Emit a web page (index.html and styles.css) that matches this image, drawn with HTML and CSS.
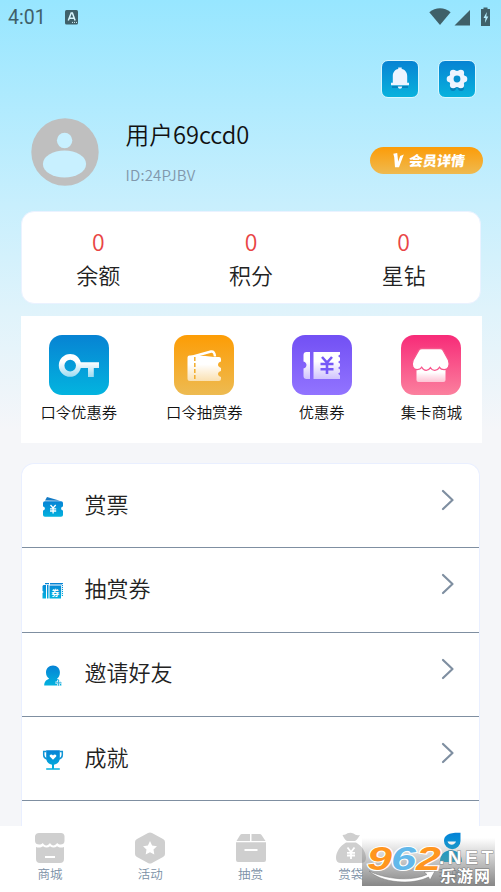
FILE: index.html
```html
<!DOCTYPE html>
<html lang="zh-CN">
<head>
<meta charset="utf-8">
<title>我的</title>
<link rel="stylesheet" href="styles.css">
</head>
<body>
<svg class="defs" width="0" height="0">
  <defs>
    <linearGradient id="blue" x1="0" y1="0" x2="0" y2="1"><stop offset="0" stop-color="#0682d5"/><stop offset="1" stop-color="#03b2de"/></linearGradient>
    <linearGradient id="fade" x1="0" y1="0" x2="0" y2="1"><stop offset=".35" stop-color="#fff"/><stop offset="1" stop-color="#fff" stop-opacity=".6"/></linearGradient>
  </defs>
</svg>
<div class="app">
  <header class="status">
    <span class="clock">4:01</span>
    <svg class="lang" width="13" height="15" viewBox="0 0 13 15"><rect width="13" height="14.5" rx="1.5" fill="#3f6069"/><path d="M3.3 10.5 6.2 3h1.2l2.7 7.5M4.5 8.3h4.300" fill="none" stroke="#d8f5fd" stroke-width="1.5"/><path d="M7 12.4h5" stroke="#d8f5fd" stroke-dasharray="1 1"/></svg>
    <svg class="signals" width="64" height="20" viewBox="0 0 64 20"><g fill="#3f6069"><path d="M.3 5.2C6.5-.2 15.500-.2 21.600 5.200L11 18z"/><path d="M25.500 18.500 41 3v15.500z"/><path d="M54.500 2V.500h4V2h2.500v17H52V2z"/></g><path d="m57.800 5-3.300 6h2l-.6 5 3.400-6.600h-2z" fill="#b6efff"/></svg>
  </header>
  <div class="tools">
    <div class="tool"><svg width="36" height="36" viewBox="0 0 36 36"><path d="M10 25h16v2H10z" fill="#056eaa" opacity=".6"/><path d="M9 24.300v-2.500h1.800v-6.500c0-4 2-6.600 5.400-7.300V6.600h3.500V8c3.400.7 5.500 3.300 5.500 7.300v6.500H27v2.500z" fill="#edf4ff"/><path d="M15.800 25.500h4.400c-.3 2.900-4.100 2.900-4.400 0z" fill="#edf4ff"/></svg></div>
    <div class="tool"><svg width="36" height="36" viewBox="0 0 36 36"><g fill="#0671ad" opacity=".7" transform="translate(0 1.500)"><circle cx="18" cy="18" r="7.800"/><circle cx="14" cy="25.500" r="3"/><circle cx="22" cy="25.500" r="3"/></g><g fill="#edf4ff"><circle cx="18" cy="18" r="8.300"/><circle cx="11" cy="18" r="3.300"/><circle cx="25" cy="18" r="3.300"/><circle cx="14.200" cy="12" r="3.300"/><circle cx="21.800" cy="12" r="3.300"/><circle cx="14.200" cy="24" r="3.300"/><circle cx="21.800" cy="24" r="3.300"/></g><circle cx="18" cy="18" r="3.400" fill="#0790cf"/></svg></div>
  </div>
  <section class="profile">
    <svg class="avatar" width="68" height="68" viewBox="0 0 68 68"><circle cx="34" cy="34" r="33.700" fill="#bfbfbf"/><circle cx="33.600" cy="22.500" r="7.700" fill="#c8f0ff"/><ellipse cx="33.500" cy="46" rx="21.600" ry="13.500" fill="#c8f0ff"/></svg>
    <div class="who"><div class="name">用户69ccd0</div><div class="uid">ID:24PJBV</div></div>
    <div class="vip"><svg width="11" height="15" viewBox="0 0 11 15"><path d="M.3.700 4.200 0l1 8.800L7.200 3l3.600-1.500L6 14.300H2L1.200 4z" fill="#fff"/></svg><span>会员详情</span></div>
  </section>
  <section class="stats">
    <div class="stat"><b>0</b><span>余额</span></div>
    <div class="stat"><b>0</b><span>积分</span></div>
    <div class="stat"><b>0</b><span>星钻</span></div>
  </section>
  <section class="shortcuts">
    <div class="shortcut"><div class="tile key"><svg width="60" height="60" viewBox="0 0 60 60"><path fill="url(#fade)" fill-rule="evenodd" d="M21.200 19c5.200 0 9.200 3.500 10.600 8.200H50V33h-5.200v9H39v-9h-7.200c-1.300 5.200-5.400 8.800-10.600 8.800A11.400 11.400 0 1 1 21.200 19zm0 5.800a5.800 5.800 0 1 0 0 11.600 5.800 5.800 0 0 0 0-11.600z"/></svg></div><span>口令优惠券</span></div>
    <div class="shortcut"><div class="tile ticket"><svg width="60" height="60" viewBox="0 0 60 60"><path d="m15.500 22.500 21.500-6q3.500-.6 4 5" fill="none" stroke="#fff" stroke-width="2.500"/><path fill="url(#fade)" d="M13.500 22.500q0-2 2-2l16 .5 8.500 1h5q2 0 2 2v2.600c-4 .8-4 5.500 0 6.300v3c-4 .8-4 5.200 0 6V44q0 2-2 2H16q-2.500 0-2.500-2.500z"/><path d="M20.800 22v24" stroke="#f3ad2c" stroke-width="1.500" stroke-dasharray="4 2"/></svg></div><span>口令抽赏券</span></div>
    <div class="shortcut"><div class="tile coupon"><svg width="60" height="60" viewBox="0 0 60 60"><path fill="url(#fade)" d="M14.500 17H18v27h-3.500q-3 0-3-3v-7.500c4-1 4-6 0-7V20q0-3 3-3zM21.500 17H48v2.500l-2 1.600 2 1.700v2.600l-2 1.600 2 1.700v2.600l-2 1.600 2 1.700v2.600l-2 1.600 2 1.700V44H21.500z"/><path d="m30 22 5 5.500 5-5.500M35 27v12M28.500 29h13M28.500 34.200h13" fill="none" stroke="#7558f7" stroke-width="2.600"/></svg></div><span>优惠券</span></div>
    <div class="shortcut"><div class="tile shop"><svg width="60" height="60" viewBox="0 0 60 60"><path fill="url(#fade)" d="M15.500 32h29v13q0 2-2 2h-25q-2 0-2-2z"/><path fill="#fff" stroke="#f8558c" stroke-width="1.300" d="M21 13.500h18q2 0 3 1.700l5.500 10c1.800 5.500-.4 9.400-4.400 9.400-2.500 0-3.800-1-4.600-2.300-2.500 4-7 4-9 .4-2.300 3.600-6.500 3.600-8.800-.4-.8 1.400-2.200 2.300-4.600 2.300-4 0-6-4-4-9.400l5.700-10q1.200-1.700 3.200-1.700z"/></svg></div><span>集卡商城</span></div>
  </section>
  <section class="menu">
    <div class="item"><svg class="ico" width="22" height="22" viewBox="0 0 22 22"><path fill="#147bc5" d="M3 4.500 5 1l13 3.800z"/><path fill="url(#blue)" d="M1 7q0-1.800 2-1.800h16q2 0 2 1.800v3.500c-2.500.3-2.500 3.700 0 4V19q0 1.800-2 1.800H3Q1 20.800 1 19v-4.500c2.500-.3 2.500-3.700 0-4z"/><path d="m8.500 9 2.600 3 2.600-3M11.100 12v5.500M8 12.800h6.200M8 15h6.200" fill="none" stroke="#fff" stroke-width="1.300"/></svg><span>赏票</span><svg class="go" width="14" height="22" viewBox="0 0 14 22"><path d="m2 2 9.500 9L2 20"/></svg></div>
    <div class="item"><svg class="ico" width="22" height="22" viewBox="0 0 22 22"><path fill="url(#blue)" d="M1.500 5H4v13.500H.500V13l1.200-1-1.200-1V6zM5 5h1.500v13.500H5zM7.500 5.500h11.500v13H7.500zM3 3h4v1.300H3zM8 3h13v13h-1.200V4.500H8z"/><path d="M20.400 4v13" stroke="#fff" stroke-dasharray="1 1"/><text x="13.200" y="15.500" text-anchor="middle" class="tiny">券</text></svg><span>抽赏券</span><svg class="go" width="14" height="22" viewBox="0 0 14 22"><path d="m2 2 9.500 9L2 20"/></svg></div>
    <div class="item"><svg class="ico" width="22" height="22" viewBox="0 0 22 22"><path fill="url(#blue)" d="M11 .500c4.200 0 6.900 2.900 6.900 7 0 2.800-1.200 5-3 6.300 2.500.9 4.200 2.500 4.600 6.700H2.200c0-4 2.200-5.900 5-6.800C5.300 12.500 4 10.300 4 7.500c0-4.100 2.800-7 7-7z"/><path d="M16.500 14.800v6M13.500 17.800h6" stroke="#fff" stroke-width="2.600"/><path d="M16.500 14.800v6M13.500 17.800h6" stroke="#3ab4e0" stroke-width="1.200"/></svg><span>邀请好友</span><svg class="go" width="14" height="22" viewBox="0 0 14 22"><path d="m2 2 9.500 9L2 20"/></svg></div>
    <div class="item"><svg class="ico" width="22" height="22" viewBox="0 0 22 22"><path fill="url(#blue)" d="M4.200 1.200h13.600V9c0 4-2.600 6.200-5.800 6.700v3.500h5.800v1.500H4.200v-1.500H10v-3.500C6.800 15.200 4.200 13 4.200 9z"/><path d="M4.500 2.500H1.700V6q0 3 3.300 4M17.500 2.500h2.800V6q0 3-3.300 4" fill="none" stroke="#1295d5" stroke-width="1.500"/><path d="M11 10.800 7.800 7.500C7 5.500 9.700 4.600 11 6.400c1.300-1.800 4-.9 3.200 1.100z" fill="#fff"/></svg><span>成就</span><svg class="go" width="14" height="22" viewBox="0 0 14 22"><path d="m2 2 9.500 9L2 20"/></svg></div>
  </section>
  <nav class="tabs">
    <div class="tab"><svg width="32" height="32" viewBox="0 0 32 32"><path d="M5 1h22q3 0 3.500 3v5c0 3.500-4.500 5-7.300 2-2.300 3.300-5.500 3.300-7.200 0-2.300 3.300-5.500 3.300-7.200 0C6 14 1 12.500 1 9V4q.8-3 4-3zM2 15c3 1 5 .5 7-.8 2.500 1.800 5 1.800 7 0 2.500 1.800 5 1.800 7 0 2 1.300 4 1.800 7 .8v12q0 4-4 4H6q-4 0-4-4z"/><path class="cut" d="M11 24h10v2H11z"/></svg><span>商城</span></div>
    <div class="tab"><svg width="32" height="32" viewBox="0 0 32 32"><path d="M14 1q2-1 4 0l11 6q2 1 2 3v12q0 2-2 3l-11 6q-2 1-4 0L3 25q-2-1-2-3V10q0-2 2-3z"/><path class="cut" d="m16 9 2.100 4.500 4.900.7-3.500 3.400.8 4.900-4.300-2.300-4.300 2.300.8-4.900L9 14.200l4.900-.7z"/></svg><span>活动</span></div>
    <div class="tab"><svg width="32" height="32" viewBox="0 0 32 32"><path d="M7 2h8v7H1.500L5 3.200Q5.700 2 7 2zM16.500 2h8q1.500 0 2.200 1.200L30.500 9h-14zM1 10.300h30V28q0 2-2 2H3q-2 0-2-2z"/><path class="cut" d="M9.500 17h13v2h-13z"/></svg><span>抽赏</span></div>
    <div class="tab"><svg width="32" height="32" viewBox="0 0 32 32"><path d="M7.500 3c3 0 3-.5 5-1.700q3-1.300 6 .2Q21 4 25 3c-1.500 2-3 5-5 6h-8C10 8 8.500 5 7.500 3zM11 10.500h10C27 14 31 20 31 26q0 5-5 5H6q-5 0-5-5C1 20 5 14 11 10.500z"/><path d="m12.500 15.500 3.500 4.500 3.500-4.500M16 20v7M12 20.800h8M12 23.500h8" fill="none" stroke="#fff" stroke-width="1.800"/></svg><span>赏袋</span></div>
    <div class="tab active"><svg width="32" height="32" viewBox="0 0 32 32"><path fill="url(#blue)" d="M9 9c0-6 5-8.500 16.500-8.200V9A8.200 8.200 0 0 1 9 9zM5 30c0-8 4-11 11-12 7 1 11 4 11 12z"/><path d="M12.500 9.500h8.500c-1 4-7 4.500-8.500 0z" fill="#fff"/></svg><span>我的</span></div>
  </nav>
  <div class="mark">
    <svg width="133" height="48" viewBox="0 0 133 48">
      <path d="M7 33c16 8 42 11 58 3.500l-3-2.500 11-1-5 9-1.500-3C50 47.500 20 45 7 33z" fill="#fff" stroke="#777" stroke-width=".5"/>
      <g class="mark-num"><text x="5" y="31.500" textLength="25" lengthAdjust="spacingAndGlyphs" fill="#ff961f">9</text><text x="29" y="31.500" textLength="25" lengthAdjust="spacingAndGlyphs" fill="#62b8ea">6</text><text x="54" y="31.500" textLength="25" lengthAdjust="spacingAndGlyphs" fill="#ff961f">2</text></g>
      <text class="mark-net" x="77" y="26" textLength="54" lengthAdjust="spacing">.NET</text>
      <text class="mark-cn" x="78" y="43.500" textLength="50">乐游网</text>
    </svg>
  </div>
</div>
</body>
</html>
```
FILE: styles.css
```css
* { box-sizing: border-box; }
body { margin: 0; font-family: "Noto Sans CJK SC", sans-serif; font-weight: 350; color: #222; }
svg { display: block; flex: none; }
.defs { position: absolute; }
.app {
  position: relative;
  width: 501px;
  height: 892px;
  overflow: hidden;
  display: flex;
  flex-direction: column;
  background: linear-gradient(#97e6ff 0, #c8effd 205px, #dff3fb 310px, #f5f6f9 430px);
}
.status { height: 34px; flex: none; display: flex; align-items: center; padding: 1px 9px 0 8px; color: #3f6069; }
.clock { font: 19.500px/34px Roboto, sans-serif; width: 57px; }
.signals { margin-left: auto; margin-right: -1px; margin-top: -2px; }
.tools { display: flex; justify-content: flex-end; gap: 19px; height: 38px; flex: none; margin: 26px 25px 0 0; }
.tool { width: 38px; height: 38px; border: 1px solid #d6f7ff; border-radius: 7px; background: linear-gradient(#0783d3, #08b2dd); }
.profile { display: flex; align-items: flex-start; height: 113px; flex: none; padding: 20px 18px 0 31px; }
.avatar { margin-top: .4px; margin-right: .5px; }
.who { margin: -1px 0 0 26px; }
.name { font-size: 23.700px; line-height: 34px; color: #111; }
.uid { font-size: 15px; line-height: 22px; margin-top: 13px; letter-spacing: .2px; color: #8198ac; }
.vip {
  margin: 29px 0 0 auto; width: 113px; height: 27px; border-radius: 14px;
  display: flex; align-items: center; padding-left: 23px; gap: 5px;
  background: linear-gradient(#fc9c08, #efba50); color: #fff;
}
.vip span { font-size: 14px; line-height: 20px; margin-top: -2px; font-weight: 900; transform: skewX(-8deg); white-space: nowrap; }
.stats { flex: none; height: 93px; margin: 0 20px 0 21px; padding: 13px 0 0; border: 1px solid #eaf2ff; border-radius: 13px; background: #fff; display: flex; }
.stat { flex: 1; display: flex; flex-direction: column; align-items: center; }
.stat b { font-size: 23px; font-weight: 350; line-height: 32px; color: #e94545; }
.stat span { font-size: 22px; line-height: 34px; }
.shortcuts { flex: none; height: 127px; margin: 12px 19px 0 21px; padding: 19px 20px 0 19.500px; background: #fff; display: flex; justify-content: space-between; }
.shortcut { display: flex; flex-direction: column; align-items: center; font-size: 15.300px; line-height: 22px; color: #111; gap: 5px; }
.tile { width: 60px; height: 60px; border-radius: 13px; }
.key { background: linear-gradient(#0783d3, #03b4df); }
.ticket { background: linear-gradient(#fd9d05, #edbb52); }
.coupon { background: linear-gradient(#7250f4, #9274ff); }
.shop { background: linear-gradient(#f72b78, #fb809e); }
.menu { flex: 1; min-height: 0; overflow: hidden; margin: 20px 21px 0 21px; border: 1px solid #e9efff; border-bottom: 0; border-radius: 13px 13px 0 0; background: #fff; }
.item { height: 84.300px; display: flex; align-items: center; padding: 0 24px 0 20px; border-bottom: 1.500px solid #7f8fa1; font-size: 22px; line-height: 32px; }
.item span { margin-left: 20.500px; margin-top: -6px; }
.ico { margin-top: 3px; }
.tiny { font: 700 8px "Noto Sans CJK SC", sans-serif; fill: #fff; }
.go { margin-left: auto; margin-top: -11px; fill: none; stroke: #7f8fa1; stroke-width: 2.200; stroke-linecap: round; stroke-linejoin: round; }
.tabs { flex: none; height: 66px; display: flex; padding-top: 5.500px; background: #fff; }
.tab { flex: 1; display: flex; flex-direction: column; align-items: center; font-size: 12.500px; line-height: 18px; color: #7a8fa5; gap: 1px; fill: #cfcfcf; }
.cut { fill: #fff; }
.mark { position: absolute; left: 362px; top: 838px; width: 133px; height: 48px; background: linear-gradient(rgba(125,125,125,0), rgba(125,125,125,.92)); }
.mark-num { font: italic 700 33px "Liberation Sans", sans-serif; stroke: #fff; stroke-width: 2px; paint-order: stroke; }
.mark-net { font: 700 19px "Liberation Sans", sans-serif; fill: #fff; stroke: #888; stroke-width: 1px; paint-order: stroke; }
.mark-cn { font: 700 16px "Noto Sans CJK SC", sans-serif; fill: #fff; stroke: #777; stroke-width: 1px; paint-order: stroke; }
```
